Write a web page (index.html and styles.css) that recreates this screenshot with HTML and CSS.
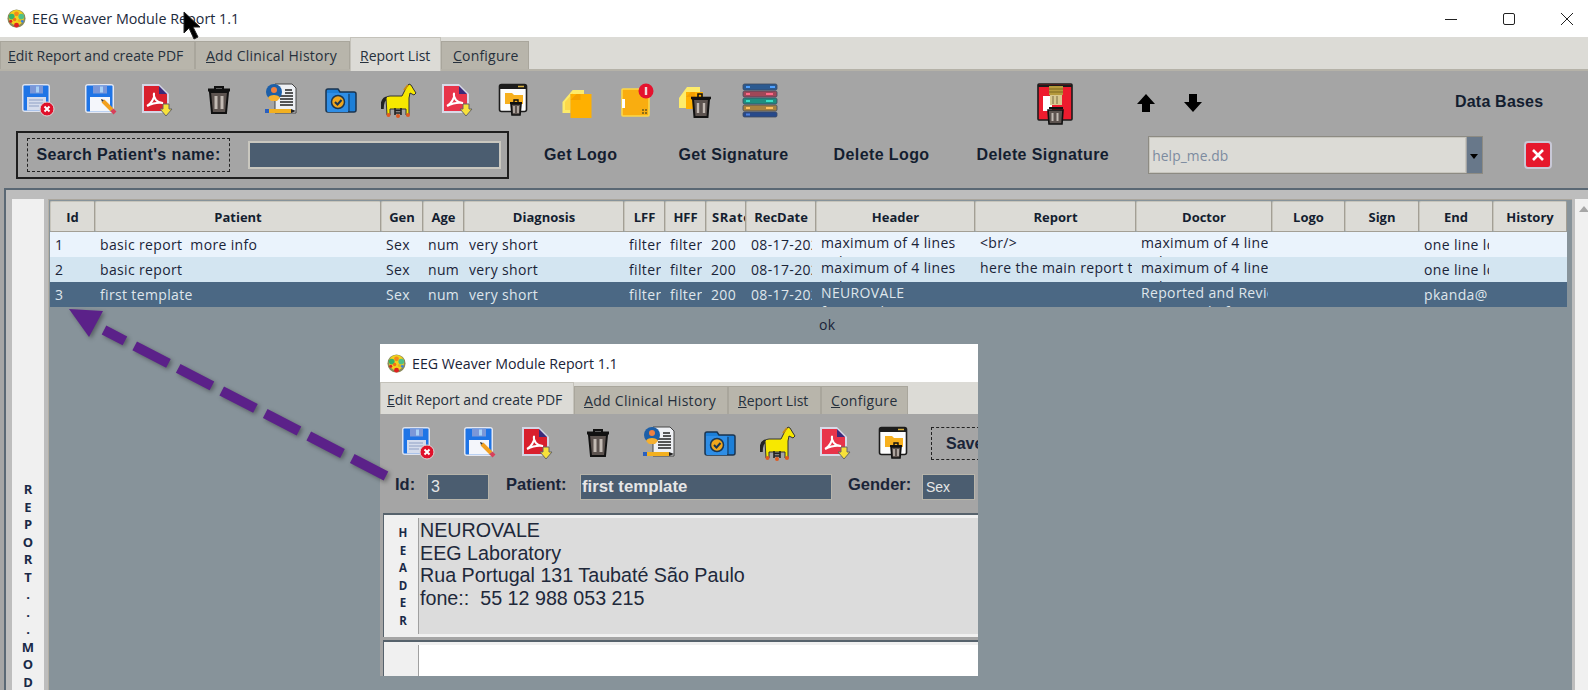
FILE: index.html
```html
<!DOCTYPE html>
<html lang="en">
<head>
    <meta charset="UTF-8">
    <title>EEG Weaver Module Report 1.1</title>
    <link rel="stylesheet" href="styles.css">
</head>
<body>
    <!-- icon set, reused by main window and the pasted window -->
    <svg class="defs" xmlns="http://www.w3.org/2000/svg">
        <symbol id="i-logo" viewBox="0 0 20 20">
            <circle cx="10" cy="10" r="9.5" fill="#8a8a5a"/>
            <circle cx="10" cy="9" r="8" fill="#f2d21c"/>
            <circle cx="5" cy="8" r="3" fill="#34b36a"/>
            <circle cx="15" cy="8" r="3" fill="#4fc08a"/>
            <circle cx="10" cy="5" r="2.5" fill="#f08a1c"/>
            <circle cx="8" cy="11" r="1.8" fill="#f0701c"/>
            <circle cx="13" cy="12" r="1.6" fill="#e8b01c"/>
            <circle cx="10" cy="17" r="2.6" fill="#e02020"/>
            <circle cx="4" cy="13" r="1.6" fill="#e02020"/>
            <circle cx="16" cy="13" r="1.4" fill="#3a7fe0"/>
        </symbol>
        <symbol id="i-save-x" viewBox="0 0 36 36">
            <rect x="2" y="2" width="28" height="28" rx="3" fill="#dfe3ee"/>
            <rect x="3.5" y="3.5" width="25" height="25" rx="1" fill="#1e74e6"/>
            <rect x="10" y="3.5" width="13" height="8" fill="#7b97d8"/>
            <rect x="16" y="4.5" width="3" height="6" fill="#a8d0f5"/>
            <rect x="7" y="15" width="19" height="13.5" fill="#d5dcec"/>
            <path d="M9 18h14M9 21h14M9 24h10" stroke="#8fa0c4"/>
            <circle cx="27" cy="27" r="7" fill="#e0102a" stroke="#d8d8d8"/>
            <path d="M24.5 24.5l5 5M29.5 24.5l-5 5" stroke="#fff" stroke-width="2"/>
        </symbol>
        <symbol id="i-save-pen" viewBox="0 0 36 36">
            <rect x="2" y="2" width="29" height="29" rx="3" fill="#e6e8f0"/>
            <rect x="3.5" y="3.5" width="26" height="26" rx="1" fill="#1e74e6"/>
            <rect x="10" y="3.5" width="14" height="8" fill="#7b97d8"/>
            <rect x="17" y="4.5" width="3" height="6" fill="#a8d0f5"/>
            <rect x="7" y="15" width="20" height="14.5" fill="#f4f6fb"/>
            <path d="M20 19l9 9" stroke="#f2a020" stroke-width="4"/>
            <path d="M18 17l3 1-2 2z" fill="#333"/>
            <path d="M29 28l3 3" stroke="#d8405a" stroke-width="4"/>
        </symbol>
        <symbol id="i-pdf" viewBox="0 0 36 36">
            <path d="M3 2h17l10 10v19H3z" fill="#d4d6e6"/>
            <path d="M5 4h15v8h8v17H5z" fill="#d91f2d"/>
            <path d="M20 4l8 8h-8z" fill="#3b2a7a"/>
            <path d="M8 24c4-2 8-8 7-13-1 5 3 10 9 10-5-1-10 0-16 3z" fill="none" stroke="#fff" stroke-width="2"/>
            <path d="M24 22h6v5h3l-6 7-6-7h3z" fill="#f7e13a" stroke="#666"/>
        </symbol>
        <symbol id="i-pdf-b" viewBox="0 0 36 36">
            <path d="M3 2h17l10 10v19H3z" fill="#d8dae8"/>
            <path d="M5 4h15v8h8v17H5z" fill="#e8344a"/>
            <path d="M20 4l8 8h-8z" fill="#3b2a7a"/>
            <path d="M8 24c4-2 8-8 7-13-1 5 3 10 9 10-5-1-10 0-16 3z" fill="none" stroke="#fff" stroke-width="2"/>
            <path d="M24 22h6v5h3l-6 7-6-7h3z" fill="#f7e13a" stroke="#666"/>
        </symbol>
        <symbol id="i-trash" viewBox="0 0 36 36">
            <path d="M14 8V5h8v3" fill="none" stroke="#111" stroke-width="2"/>
            <path d="M7 8h22" stroke="#111" stroke-width="3"/>
            <path d="M9 10h18l-2 21H11z" fill="#5d5450" stroke="#111" stroke-width="2"/>
            <rect x="13.5" y="14" width="3" height="13" fill="#c2bab3"/>
            <rect x="19.5" y="14" width="3" height="13" fill="#c2bab3"/>
        </symbol>
        <symbol id="i-idcard" viewBox="0 0 36 36">
            <path d="M12 2h17l4 4v25H12z" fill="#eef0f4" stroke="#444"/>
            <path d="M17 14h13M17 17h13M17 20h13M17 23h13M22 8h7M22 11h8" stroke="#222" stroke-width="1.6"/>
            <circle cx="11" cy="10" r="8" fill="#1d5fa8"/>
            <circle cx="11" cy="8" r="3" fill="#f08040"/>
            <path d="M5 16c1-4 11-4 12 0l-3 3H8z" fill="#f5b030"/>
            <path d="M5 29h23" stroke="#f2b020" stroke-width="4"/>
            <path d="M2 29h4" stroke="#2a60c0" stroke-width="4"/>
            <path d="M28 27l5 2-5 2z" fill="#222"/>
        </symbol>
        <symbol id="i-folder" viewBox="0 0 36 36">
            <path d="M3 9q0-2 2-2h10l2 3h14q2 0 2 2v16q0 2-2 2H5q-2 0-2-2z" fill="#1c7fd8" stroke="#1a3550" stroke-width="1.5"/>
            <path d="M4 11h21v19H5q-1 0-1-2z" fill="#2f8ee6"/>
            <path d="M26 12v18" stroke="#1a3550"/>
            <circle cx="15" cy="20" r="6.5" fill="#f0a61c" stroke="#1a3550" stroke-width="1.5"/>
            <path d="M12 20l2.5 2.5 4-4.500" fill="none" stroke="#1a3550" stroke-width="2"/>
        </symbol>
        <symbol id="i-horse" viewBox="0 0 36 36">
            <path d="M1 27c0-6 1-11 6-11" fill="none" stroke="#222" stroke-width="3.500"/>
            <path d="M5 16q1-2 4-2h12l4-8 3-4 2 1 3 5 2 3-2 2-4-2-1 5v17h-3v-6H9v6H6z" fill="#f7e800" stroke="#333"/>
            <path d="M27 3l-4 5" stroke="#c88a10" stroke-width="2"/>
            <path d="M14 26v7M20 26v7M14 28.500h6M14 31h6" stroke="#222" stroke-width="1.600"/>
            <circle cx="7.500" cy="33" r="2" fill="#e05a20"/>
            <circle cx="17" cy="34" r="2" fill="#e05a20"/>
            <circle cx="27" cy="33" r="2" fill="#e05a20"/>
        </symbol>
        <symbol id="i-folder-trash" viewBox="0 0 36 36">
            <rect x="2.5" y="2.5" width="27" height="27" rx="2" fill="#fdfdfd" stroke="#1c1c1c" stroke-width="1.6"/>
            <path d="M2.5 5h27" stroke="#1c1c1c" stroke-width="4"/>
            <path d="M21 4.500h6" stroke="#d8b040" stroke-width="1.5"/>
            <path d="M8 11h7l2 2h9v9H8z" fill="#f7b01e"/>
            <path d="M13 21h12" stroke="#111" stroke-width="2"/>
            <path d="M14 22h10l-1 11h-8z" fill="#5d5450" stroke="#111" stroke-width="1.6"/>
            <path d="M17 24v7M21 24v7" stroke="#c2bab3" stroke-width="1.6"/>
            <path d="M17 20v-2h4v2" fill="none" stroke="#111" stroke-width="1.4"/>
        </symbol>
        <symbol id="i-box" viewBox="0 0 36 36">
            <path d="M3.500 20L13.700 8H25v4H11.500v19h-8z" fill="#fdeb6a"/>
            <path d="M6 20l8-9v2h-2.500v15H6z" fill="#fcd84a"/>
            <rect x="11.500" y="12" width="21" height="24" fill="#ffb000"/>
            <path d="M11.500 18l6-6h4v6z" fill="#f4a000"/>
        </symbol>
        <symbol id="i-box-alert" viewBox="0 0 36 36">
            <rect x="3" y="7" width="27" height="27" rx="1" fill="#f9ad10" stroke="#fcd84a" stroke-width="1.6"/>
            <rect x="3" y="17" width="3" height="9" fill="#fff"/>
            <path d="M23 28h2M26 28h2M26 31h2M23 31h2" stroke="#6a5a1a" stroke-width="1.5"/>
            <circle cx="27" cy="9" r="7.500" fill="#e5122e"/>
            <rect x="25.800" y="5" width="2.400" height="8" fill="#f0dada"/>
        </symbol>
        <symbol id="i-box-trash" viewBox="0 0 36 36">
            <path d="M2 16l8-11h13v5H9v16H2z" fill="#fdeb6a"/>
            <rect x="9" y="10" width="17" height="17" fill="#ffb000"/>
            <path d="M9 15l5-5h4v5z" fill="#f4a000"/>
            <path d="M14 16h20" stroke="#111" stroke-width="2.600"/>
            <path d="M16 17h16l-1.500 18h-13z" fill="#5d5450" stroke="#111" stroke-width="2"/>
            <path d="M21 21v10M27 21v10" stroke="#c2bab3" stroke-width="2.400"/>
            <path d="M21 15v-3h4v3" fill="none" stroke="#111" stroke-width="1.600"/>
        </symbol>
        <symbol id="i-stack" viewBox="0 0 36 36">
            <rect x="1" y="2" width="34" height="6" rx="1.500" fill="#2c5a90" stroke="#3d4a60" stroke-width=".8"/>
            <rect x="1" y="9" width="34" height="6" rx="1.500" fill="#a04858" stroke="#3d4a60" stroke-width=".8"/>
            <rect x="1" y="16" width="34" height="6" rx="1.500" fill="#1f8d80" stroke="#3d4a60" stroke-width=".8"/>
            <rect x="1" y="23" width="34" height="6" rx="1.500" fill="#a68240" stroke="#3d4a60" stroke-width=".8"/>
            <rect x="1" y="30" width="34" height="5" rx="1.500" fill="#27498a" stroke="#3d4a60" stroke-width=".8"/>
            <path d="M4 5h4M28 5h5" stroke="#4ea0ff" stroke-width="2"/>
            <path d="M4 12h4M24 12h7" stroke="#ff6a8a" stroke-width="2"/>
            <path d="M4 19h4M24 19h7" stroke="#38e0c8" stroke-width="2"/>
            <path d="M4 26h4M24 26h7" stroke="#ffc060" stroke-width="2"/>
            <path d="M4 32.500h4" stroke="#4e80e0" stroke-width="2"/>
        </symbol>
        <symbol id="i-sign" viewBox="0 0 36 42">
            <rect x="1" y="1" width="34" height="36" rx="1" fill="#ee1c2e" stroke="#1c1c1c" stroke-width="1.600"/>
            <path d="M1 3h34" stroke="#1c1c1c" stroke-width="2"/>
            <rect x="6" y="13" width="9" height="15" fill="#fff"/>
            <rect x="12" y="3" width="14" height="9" fill="#b69a3c"/>
            <path d="M12 6h14M12 9h14" stroke="#7a6620"/>
            <rect x="13" y="12" width="12" height="10" fill="#d8c890"/>
            <path d="M16 13v8M20 13v8" stroke="#7a6a40"/>
            <path d="M12 25h14" stroke="#111" stroke-width="2"/>
            <path d="M11 27h15l-1 14H12z" fill="#5d5450" stroke="#111" stroke-width="1.600"/>
            <path d="M15.500 30v8M20.500 30v8" stroke="#c2bab3" stroke-width="2"/>
        </symbol>
    </svg>

    <div class="app">
        <div class="titlebar">
            <svg class="logo"><use href="#i-logo"/></svg>
            <span class="title-text">EEG Weaver Module Report 1.1</span>
            <div class="win-btns">
                <svg width="14" height="14" viewBox="0 0 14 14"><path d="M1 7.500h12" stroke="#222"/></svg>
                <svg width="14" height="14" viewBox="0 0 14 14"><rect x="1.500" y="1.500" width="11" height="11" rx="1.500" fill="none" stroke="#222"/></svg>
                <svg width="14" height="14" viewBox="0 0 14 14"><path d="M1 1l12 12M13 1L1 13" stroke="#222"/></svg>
            </div>
        </div>

        <div class="tabs">
            <div class="tab tab-edit"><u>E</u>dit Report and create PDF</div>
            <div class="tab tab-hist"><u>A</u>dd Clinical History</div>
            <div class="tab tab-list active"><u>R</u>eport List</div>
            <div class="tab tab-conf"><u>C</u>onfigure</div>
        </div>

        <div class="toolbar">
            <div class="tool-row">
                <div class="icon-grid">
                    <svg class="ic"><use href="#i-save-x"/></svg>
                    <svg class="ic"><use href="#i-save-pen"/></svg>
                    <svg class="ic"><use href="#i-pdf"/></svg>
                    <svg class="ic"><use href="#i-trash"/></svg>
                    <svg class="ic"><use href="#i-idcard"/></svg>
                    <svg class="ic"><use href="#i-folder"/></svg>
                    <svg class="ic"><use href="#i-horse"/></svg>
                    <svg class="ic"><use href="#i-pdf-b"/></svg>
                    <svg class="ic"><use href="#i-folder-trash"/></svg>
                    <svg class="ic"><use href="#i-box"/></svg>
                    <svg class="ic"><use href="#i-box-alert"/></svg>
                    <svg class="ic"><use href="#i-box-trash"/></svg>
                    <svg class="ic"><use href="#i-stack"/></svg>
                </div>
                <svg class="ic-sign"><use href="#i-sign"/></svg>
                <svg class="arrow-up" width="20" height="20" viewBox="0 0 20 20"><path d="M10 1l9 10h-5v8H6v-8H1z" fill="#000"/></svg>
                <svg class="arrow-down" width="20" height="20" viewBox="0 0 20 20"><path d="M10 19L1 9h5V1h8v8h5z" fill="#000"/></svg>
                <span class="db-label">Data Bases</span>
            </div>
            <div class="search-row">
                <div class="search-box">
                    <label class="search-label">Search Patient's name:</label>
                    <div class="search-input"></div>
                </div>
                <span class="act act-getlogo">Get Logo</span>
                <span class="act act-getsign">Get Signature</span>
                <span class="act act-dellogo">Delete Logo</span>
                <span class="act act-delsign">Delete Signature</span>
                <div class="combo">
                    <div class="combo-text">help_me.db</div>
                    <div class="combo-btn"></div>
                </div>
                <div class="close-red">
                    <svg width="14" height="14" viewBox="0 0 14 14"><path d="M2 2l10 10M12 2L2 12" stroke="#fff" stroke-width="2.600"/></svg>
                </div>
            </div>
        </div>

        <div class="main">
            <div class="side-strip">
                <span>R</span><span>E</span><span>P</span><span>O</span><span>R</span><span>T</span><span>.</span><span>.</span><span>.</span><span>M</span><span>O</span><span>D</span><span>U</span>
            </div>
            <div class="table-area">
                <table class="reports">
                    <colgroup>
                        <col class="c-id"><col class="c-patient"><col class="c-gen"><col class="c-age">
                        <col class="c-diag"><col class="c-lff"><col class="c-hff"><col class="c-srate">
                        <col class="c-date"><col class="c-header"><col class="c-report"><col class="c-doctor">
                        <col class="c-logo"><col class="c-sign"><col class="c-end"><col class="c-hist">
                    </colgroup>
                    <thead>
                        <tr>
                            <th>Id</th><th>Patient</th><th>Gen</th><th>Age</th><th>Diagnosis</th><th>LFF</th><th>HFF</th><th class="clip">SRate</th>
                            <th>RecDate</th><th>Header</th><th>Report</th><th>Doctor</th><th>Logo</th><th>Sign</th><th>End</th><th>History</th>
                        </tr>
                    </thead>
                    <tbody>
                        <tr class="row-a">
                            <td><div class="cell">1</div></td><td><div class="cell">basic report&nbsp; more info</div></td><td><div class="cell">Sex</div></td><td><div class="cell">number</div></td>
                            <td><div class="cell">very short</div></td><td><div class="cell">filter low</div></td><td><div class="cell">filter high</div></td><td><div class="cell">200</div></td>
                            <td><div class="cell">08-17-2021</div></td>
                            <td><div class="cell multi">maximum of 4 lines<br>to be in</div></td>
                            <td><div class="cell multi">&lt;br/&gt;<br>main ie</div></td>
                            <td><div class="cell multi">maximum of 4 lines<br>to be in</div></td>
                            <td></td><td></td><td><div class="cell">one line long</div></td><td></td>
                        </tr>
                        <tr class="row-b">
                            <td><div class="cell">2</div></td><td><div class="cell">basic report</div></td><td><div class="cell">Sex</div></td><td><div class="cell">number</div></td>
                            <td><div class="cell">very short</div></td><td><div class="cell">filter low</div></td><td><div class="cell">filter high</div></td><td><div class="cell">200</div></td>
                            <td><div class="cell">08-17-2021</div></td>
                            <td><div class="cell multi">maximum of 4 lines<br>to be in</div></td>
                            <td><div class="cell multi">here the main report text<br>main ie</div></td>
                            <td><div class="cell multi">maximum of 4 lines<br>to be in</div></td>
                            <td></td><td></td><td><div class="cell">one line long</div></td><td></td>
                        </tr>
                        <tr class="row-sel">
                            <td><div class="cell">3</div></td><td><div class="cell">first template</div></td><td><div class="cell">Sex</div></td><td><div class="cell">number</div></td>
                            <td><div class="cell">very short</div></td><td><div class="cell">filter low</div></td><td><div class="cell">filter high</div></td><td><div class="cell">200</div></td>
                            <td><div class="cell">08-17-2021</div></td>
                            <td><div class="cell multi">NEUROVALE<br>format ok</div></td>
                            <td></td>
                            <td><div class="cell multi">Reported and Reviewed<br>Dr. Marcelo f</div></td>
                            <td></td><td></td><td><div class="cell">pkanda@</div></td><td></td>
                        </tr>
                    </tbody>
                </table>
                <div class="stray">ok</div>
            </div>
            <div class="scrollbar"><div class="scroll-up"></div></div>

            <!-- pasted screenshot of the edit tab -->
            <div class="inset">
                <div class="inset-title">
                    <svg class="logo"><use href="#i-logo"/></svg>
                    <span>EEG Weaver Module Report 1.1</span>
                </div>
                <div class="inset-tabs">
                    <div class="itab itab-edit active"><u>E</u>dit Report and create PDF</div>
                    <div class="itab itab-hist"><u>A</u>dd Clinical History</div>
                    <div class="itab itab-list"><u>R</u>eport List</div>
                    <div class="itab itab-conf"><u>C</u>onfigure</div>
                </div>
                <div class="inset-body">
                    <div class="inset-icons">
                        <svg class="ic"><use href="#i-save-x"/></svg>
                        <svg class="ic"><use href="#i-save-pen"/></svg>
                        <svg class="ic"><use href="#i-pdf"/></svg>
                        <svg class="ic"><use href="#i-trash"/></svg>
                        <svg class="ic"><use href="#i-idcard"/></svg>
                        <svg class="ic"><use href="#i-folder"/></svg>
                        <svg class="ic"><use href="#i-horse"/></svg>
                        <svg class="ic"><use href="#i-pdf-b"/></svg>
                        <svg class="ic"><use href="#i-folder-trash"/></svg>
                        <div class="save-box">Save</div>
                    </div>
                    <div class="inset-fields">
                        <span class="flabel f-id">Id:</span>
                        <div class="finput fi-id">3</div>
                        <span class="flabel f-patient">Patient:</span>
                        <div class="finput fi-patient">first template</div>
                        <span class="flabel f-gender">Gender:</span>
                        <div class="finput fi-gender">Sex</div>
                    </div>
                    <div class="section sec-header">
                        <div class="sec-side"><span>H</span><span>E</span><span>A</span><span>D</span><span>E</span><span>R</span></div>
                        <div class="sec-text">NEUROVALE<br>EEG Laboratory<br>Rua Portugal 131 Taubaté São Paulo<br>fone::&nbsp; 55 12 988 053 215</div>
                    </div>
                    <div class="section sec-report">
                        <div class="sec-side"></div>
                        <div class="sec-blank"></div>
                    </div>
                </div>
            </div>

            <svg class="big-arrow" width="420" height="200" viewBox="0 0 420 200">
                <path d="M386 167L104 21" fill="none" stroke="#5b2189" stroke-width="10" stroke-dasharray="38 11"/>
                <path d="M69 0L103 2L89 28z" fill="#5b2189"/>
            </svg>
        </div>

        <svg class="cursor" width="18" height="30" viewBox="0 0 18 30"><path d="M1 1l0 21 5-5 5 11 4-2-5-10 7 0z" fill="#000" stroke="#222"/></svg>
    </div>
</body>
</html>
```

FILE: styles.css
```css
* {
    box-sizing: border-box;
}
html, body {
    margin: 0;
    height: 100%;
    overflow: hidden;
}
body {
    font-family: "Open Sans", "Noto Sans", sans-serif;
    color: #1a2438;
    background-color: #a5a5a5;
}
.defs {
    position: absolute;
    width: 0;
    height: 0;
}
.app {
    position: relative;
    display: flex;
    flex-direction: column;
    width: 1588px;
    height: 690px;
    overflow: hidden;
}

/* title bar */
.titlebar {
    display: flex;
    align-items: center;
    height: 37px;
    padding-left: 7px;
    background-color: #fff;
    font-size: 14.3px;
    color: #1c2a3c;
}
.logo {
    width: 19px;
    height: 19px;
    flex: none;
}
.title-text {
    margin-left: 6px;
}
.win-btns {
    display: flex;
    gap: 44px;
    margin-left: auto;
    margin-right: 14px;
}

/* tabs */
.tabs {
    display: flex;
    align-items: flex-end;
    height: 34px;
    background-color: #dcdbd6;
    border-bottom: 2px solid #b5b2a8;
    font-size: 14px;
}
.tab {
    height: 28px;
    padding-left: 7px;
    line-height: 27px;
    background-color: #b8b5ab;
    border: 1px solid #a9a69c;
    border-bottom: 0;
    color: #26303c;
    white-space: nowrap;
}
.tab-edit { width: 195px; }
.tab-hist { width: 155px; padding-left: 10px; letter-spacing: .25px; }
.tab-list { width: 91px; padding-left: 9px; }
.tab-conf { width: 88px; padding-left: 11px; letter-spacing: .2px; }
.tab.active {
    height: 34px;
    margin-bottom: -2px;
    line-height: 35px;
    background-color: #dcdbd6;
    border-color: #c4c2ba;
}

/* toolbar */
.toolbar {
    height: 117px;
    padding-top: 11px;
    background-color: #a5a5a5;
}
.tool-row {
    display: flex;
    align-items: center;
    height: 36px;
    font-weight: 700;
}
.icon-grid {
    display: grid;
    grid-template-columns: 62px 63px 50px 73px 52px 68px 48px 67px 50px 73px 47px 69px 61px;
    justify-items: center;
    align-items: center;
    margin-left: 7px;
}
.ic {
    display: block;
    width: 36px;
    height: 36px;
}
.ic-sign {
    width: 36px;
    height: 42px;
    margin-left: 247px;
    margin-top: 7px;
    flex: none;
}
.arrow-up { margin-left: 63px; margin-top: 5px; }
.arrow-down { margin-left: 27px; margin-top: 5px; }
.db-label {
    margin-left: 252px;
    margin-top: 4px;
    font-family: "Liberation Sans", sans-serif;
    font-size: 16px;
    letter-spacing: .2px;
    color: #141e30;
}
.search-row {
    display: flex;
    align-items: center;
    height: 48px;
    margin-top: 13px;
    padding-left: 16px;
    font-family: "Liberation Sans", sans-serif;
    font-size: 16px;
    font-weight: 700;
    letter-spacing: .4px;
    color: #141e30;
}
.search-box {
    display: flex;
    align-items: center;
    width: 493px;
    height: 48px;
    padding-left: 9px;
    border: 2px solid #1e1e1e;
}
.search-label {
    width: 203px;
    height: 34px;
    line-height: 32px;
    text-align: center;
    white-space: nowrap;
    border: 1.5px dashed #222;
}
.search-input {
    width: 253px;
    height: 28px;
    margin-left: 18px;
    background-color: #4b5d70;
    border: 2px solid #c9c7bf;
}
.act { white-space: nowrap; }
.act-getlogo { margin-left: 35px; }
.act-getsign { margin-left: 61px; }
.act-dellogo { margin-left: 45px; }
.act-delsign { margin-left: 47px; }
.combo {
    display: flex;
    width: 335px;
    height: 38px;
    margin-left: 39px;
    border: 1px solid #8d8b83;
}
.combo-text {
    flex: 1;
    padding-left: 2px;
    line-height: 35px;
    background-color: #dcdbd6;
    font-family: "Open Sans", sans-serif;
    font-size: 13.8px;
    font-weight: 400;
    letter-spacing: .1px;
    color: #7d8ba0;
    border: 1px solid #c8c6be;
}
.combo-btn {
    position: relative;
    width: 15px;
    margin-left: 1px;
    background-color: #68788a;
}
.combo-btn::after {
    content: "";
    position: absolute;
    left: 3px;
    top: 17px;
    border: 4.5px solid transparent;
    border-top: 5px solid #000;
}
.close-red {
    display: flex;
    align-items: center;
    justify-content: center;
    width: 28px;
    height: 28px;
    margin-left: 41px;
    background-color: #e6172d;
    border: 2px solid #c8c8d6;
    border-radius: 4px;
}

/* main grid area */
.main {
    position: relative;
    display: flex;
    flex: 1;
    min-height: 0;
    margin-left: 4px;
    padding: 9px 0 0 6px;
    background-color: #bdbdbd;
    border-top: 2px solid #5a6874;
    border-left: 2px solid #5a6874;
}
.side-strip {
    display: flex;
    flex-direction: column;
    align-items: center;
    flex: none;
    width: 32px;
    padding-top: 282px;
    background-color: #f0f0f0;
    font-weight: 700;
    font-size: 13px;
    line-height: 17.5px;
    color: #1a2a48;
}
.table-area {
    flex: none;
    width: 1524px;
    margin-left: 4px;
    padding: 1px 0 0 1px;
    background-color: #87939a;
    border-top: 1px solid #a9a59c;
    border-left: 1px solid #b3afa5;
}
.reports {
    table-layout: fixed;
    width: 1517px;
    border-collapse: separate;
    border-spacing: 0;
    font-size: 14px;
}
.c-id { width: 45px; }
.c-patient { width: 286px; }
.c-gen { width: 42px; }
.c-age { width: 41px; }
.c-diag { width: 160px; }
.c-lff { width: 41px; }
.c-hff { width: 41px; }
.c-srate { width: 40px; }
.c-date { width: 70px; }
.c-header { width: 159px; }
.c-report { width: 161px; }
.c-doctor { width: 136px; }
.c-logo { width: 73px; }
.c-sign { width: 74px; }
.c-end { width: 74px; }
.c-hist { width: 74px; }
.reports th {
    height: 31px;
    padding: 0;
    overflow: hidden;
    white-space: nowrap;
    background-color: #dcdbd6;
    border: 1px solid #a39f95;
    border-top-color: #c6c4bb;
    border-left-color: #c6c4bb;
    border-radius: 2px;
    font-size: 13px;
    font-weight: 700;
    color: #141e30;
}
.reports th.clip {
    padding-left: 5px;
    text-align: left;
    letter-spacing: .5px;
}
.reports td {
    height: 25px;
    padding: 0 4px 0 5px;
    vertical-align: top;
}
.cell {
    height: 25px;
    overflow: hidden;
    white-space: nowrap;
    line-height: 25px;
    letter-spacing: .35px;
}
.cell.multi {
    padding-top: 1px;
    line-height: 19px;
}
.row-a { background-color: #eaf3fc; }
.row-b { background-color: #d3e5f1; }
.row-sel {
    background-color: #4b6884;
    color: #dfe6ec;
}
.stray {
    margin: 8px 0 0 769px;
    font-size: 14px;
    letter-spacing: .35px;
}
.scrollbar {
    flex: none;
    width: 18px;
    margin-left: 3px;
    background-color: #f0f0f0;
}
.scroll-up {
    width: 0;
    margin: 7px auto 0;
    border: 5px solid transparent;
    border-top: 0;
    border-bottom: 6px solid #a6a6a6;
}

/* pasted window */
.inset {
    position: absolute;
    left: 374px;
    top: 154px;
    width: 598px;
    height: 332px;
    overflow: hidden;
    background-color: #a5a5a5;
}
.inset-title {
    display: flex;
    align-items: center;
    gap: 6px;
    height: 38px;
    padding-left: 7px;
    background-color: #fff;
    font-size: 14.2px;
}
.inset-tabs {
    display: flex;
    align-items: flex-end;
    height: 32px;
    background-color: #dcdbd6;
    font-size: 14px;
}
.itab {
    height: 28px;
    padding-left: 8px;
    line-height: 27px;
    white-space: nowrap;
    background-color: #b8b5ab;
    border: 1px solid #a9a69c;
    border-bottom: 0;
    color: #26303c;
}
.itab.active {
    height: 32px;
    padding-left: 6px;
    line-height: 33px;
    background-color: #dcdbd6;
    border-color: #c4c2ba;
}
.itab-edit { width: 194px; }
.itab-hist { width: 154px; padding-left: 9px; letter-spacing: .3px; }
.itab-list { width: 93px; padding-left: 9px; }
.itab-conf { width: 87px; padding-left: 9px; letter-spacing: .3px; }
.inset-icons {
    display: grid;
    grid-template-columns: 63px 61px 53px 69px 54px 68px 48px 66px 54px auto;
    justify-items: center;
    align-items: center;
    height: 36px;
    margin-top: 11px;
    padding-left: 6px;
}
.inset-icons .save-box {
    justify-self: start;
    width: 90px;
    height: 33px;
    margin-left: 9px;
    padding-left: 14px;
    line-height: 31px;
    border: 1.5px dashed #222;
    font-family: "Liberation Sans", sans-serif;
    font-size: 16px;
    font-weight: 700;
    white-space: nowrap;
}
.inset-fields {
    display: flex;
    align-items: center;
    height: 26px;
    margin-top: 13px;
    padding-left: 15px;
    font-family: "Liberation Sans", sans-serif;
}
.flabel {
    position: relative;
    top: -3px;
    font-size: 16.5px;
    font-weight: 700;
    white-space: nowrap;
}
.f-id { width: 32px; }
.f-patient { width: 74px; margin-left: 17px; }
.f-gender { width: 74px; margin-left: 16px; }
.finput {
    height: 26px;
    padding-left: 3px;
    line-height: 24px;
    background-color: #4b5d70;
    border: 1.5px solid #b7b4aa;
    color: #e6e6e6;
    white-space: nowrap;
}
.fi-id { width: 62px; font-size: 16px; }
.fi-patient { width: 252px; padding-left: 1px; font-size: 16.8px; font-weight: 700; }
.fi-gender { width: 53px; font-size: 14px; }
.section {
    display: flex;
    margin-left: 3px;
    padding: 3px 0 3px 4px;
    border-top: 2px solid #56626c;
    border-left: 1px solid #56626c;
    background-color: #f0f0f0;
}
.sec-header {
    height: 124px;
    margin-top: 13px;
}
.sec-report {
    height: 40px;
    margin-top: 3px;
}
.sec-side {
    display: flex;
    flex-direction: column;
    align-items: center;
    flex: none;
    width: 31px;
    padding-top: 6px;
    border-right: 1px solid #a0a0a0;
    font-size: 11.5px;
    font-weight: 700;
    line-height: 17.5px;
    color: #1a2a48;
}
.sec-text {
    flex: 1;
    padding: 1px 0 0 1px;
    background-color: #dcdcdc;
    font-family: "Liberation Sans", sans-serif;
    font-size: 19.7px;
    line-height: 22.5px;
    color: #20283a;
}
.sec-blank {
    flex: 1;
    background-color: #fff;
}

/* overlays */
.big-arrow {
    position: absolute;
    left: -6px;
    top: 119px;
    filter: drop-shadow(2px 2px 2px rgba(0, 0, 0, .35));
}
.cursor {
    position: absolute;
    left: 183px;
    top: 11px;
}
```
